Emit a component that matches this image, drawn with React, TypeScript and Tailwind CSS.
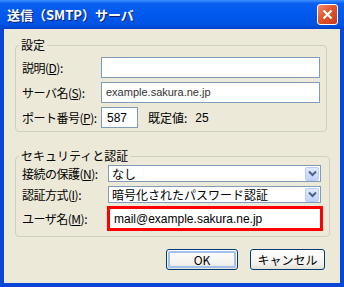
import React from 'react';

const ui = '"Noto Sans CJK JP", "Liberation Sans", sans-serif';
const latin = '"Liberation Sans", "Noto Sans CJK JP", sans-serif';

const Label: React.FC<{ text: string; k: string; w: string }> = ({ text, k, w }) => (
  <div className={`${w} shrink-0 whitespace-nowrap text-[12px] leading-[14px] tracking-[-0.5px] text-black`}>
    {text}(<u>{k}</u>):
  </div>
);

const Chevron = () => (
  <svg width="9" height="7" viewBox="0 0 9 7">
    <path d="M1 1.5 L4.5 5 L8 1.5" fill="none" stroke="#4d6185" strokeWidth="2" />
  </svg>
);

const Combo: React.FC<{ value: string }> = ({ value }) => (
  <div className="ml-[1px] w-[213px] h-[17px] shrink-0 flex items-center bg-white border border-[#7f9db9]">
    <div className="flex-1 pl-[3px] text-[12px] leading-[14px] text-black whitespace-nowrap">{value}</div>
    <div className="w-[14px] h-[14px] mr-[1px] flex items-center justify-center rounded-[2px] border border-[#b9cdf7] bg-[linear-gradient(to_bottom,#e0eafd,#c1d3fb)]">
      <Chevron />
    </div>
  </div>
);

const XpButton: React.FC<{ label: string; def?: boolean; w: string }> = ({ label, def, w }) => (
  <div className={`${w} h-[21px] rounded-[3px] border border-[#003c74] bg-[linear-gradient(to_bottom,#ffffff,#f3f2ee_70%,#e3e1d8)] p-[1px]`}>
    <div
      className={`h-full w-full flex items-center justify-center rounded-[2px] text-[12px] leading-[14px] text-black ${
        def ? 'border-2 border-[#a6c0ee]' : 'border-2 border-transparent'
      }`}
    >
      {label}
    </div>
  </div>
);

export default function App() {
  return (
    <div className="w-[344px] h-[287px] flex flex-col bg-[#0846d8]" style={{ fontFamily: ui }}>
      {/* タイトルバー */}
      <div className="h-[29px] shrink-0 flex items-center justify-between pl-[7px] pr-[6px] bg-[linear-gradient(to_bottom,#3d8fff,#0a5ff0_12%,#0058ee_50%,#0054e3_85%,#0041c8)]">
        <div className="text-[13px] leading-[16px] font-bold text-white [text-shadow:1px_1px_0_#0a1e6e]">送信（SMTP）サーバ</div>
        <div className="w-[21px] h-[21px] rounded-[3px] border border-white bg-[linear-gradient(135deg,#f28e6a,#e0552e_45%,#c43d18)] flex items-center justify-center">
          <svg width="11" height="11" viewBox="0 0 11 11">
            <path d="M1.5 1.5 L9.5 9.5 M9.5 1.5 L1.5 9.5" stroke="white" strokeWidth="2.2" />
          </svg>
        </div>
      </div>

      {/* 本体 */}
      <div className="flex-1 mx-[4px] mb-[4px] bg-[#ece9d8] flex flex-col pt-[9px] pl-[11px] pr-[13px]">
        <fieldset className="border border-[#d0d0bf] rounded-[4px] pl-[6px] pr-[6px] pt-[5px] pb-[3px]">
          <legend className="ml-[-3px] px-[2px] text-[12px] leading-[14px] text-black">設定</legend>
          <div className="flex flex-col gap-[4px]">
            <div className="flex items-center h-[21px]">
              <Label text="説明" k="D" w="w-[79px]" />
              <div className="flex-1 h-[21px] bg-white border border-[#7f9db9]" />
            </div>
            <div className="flex items-center h-[21px]">
              <Label text="サーバ名" k="S" w="w-[79px]" />
              <div className="flex-1 h-[21px] bg-white border border-[#7f9db9] flex items-center pl-[4px] text-[11px] text-[#333]" style={{ fontFamily: latin }}>
                example.sakura.ne.jp
              </div>
            </div>
            <div className="flex items-center h-[21px]">
              <Label text="ポート番号" k="P" w="w-[79px]" />
              <div className="w-[37px] h-[21px] shrink-0 bg-white border border-[#7f9db9] flex items-center pl-[5px] text-[12px] text-black" style={{ fontFamily: latin }}>
                587
              </div>
              <div className="ml-[10px] text-[12px] leading-[14px] text-black">既定値:</div>
              <div className="ml-[8px] text-[12px] leading-[14px] text-black" style={{ fontFamily: latin }}>25</div>
            </div>
          </div>
        </fieldset>

        <fieldset className="mt-[17px] border border-[#d0d0bf] rounded-[4px] pl-[6px] pr-[6px] pt-[2px] pb-[5px]">
          <legend className="ml-[-3px] px-[2px] text-[12px] leading-[14px] text-black">セキュリティと認証</legend>
          <div className="flex flex-col">
            <div className="flex items-center h-[17px]">
              <Label text="接続の保護" k="N" w="w-[85px]" />
              <Combo value="なし" />
            </div>
            <div className="flex items-center h-[17px] mt-[4px]">
              <Label text="認証方式" k="I" w="w-[85px]" />
              <Combo value="暗号化されたパスワード認証" />
            </div>
            <div className="flex items-center h-[25px] mt-[3px]">
              <Label text="ユーザ名" k="M" w="w-[85px]" />
              <div className="w-[216px] h-[25px] shrink-0 border-[3px] border-[#ff0000] bg-white flex items-center pl-[4px] text-[12px] text-black" style={{ fontFamily: latin }}>
                mail@example.sakura.ne.jp
              </div>
            </div>
          </div>
        </fieldset>

        <div className="mt-[12px] flex justify-end gap-[12px] pr-[2px]">
          <XpButton label="OK" def w="w-[72px]" />
          <XpButton label="キャンセル" w="w-[75px]" />
        </div>
      </div>
    </div>
  );
}
